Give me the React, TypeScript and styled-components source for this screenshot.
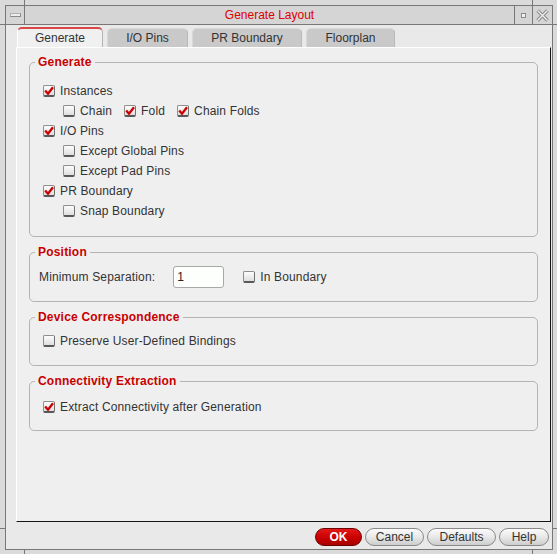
import React from 'react';
import styled, { createGlobalStyle } from 'styled-components';

const GlobalStyle = createGlobalStyle`
  html, body { margin: 0; padding: 0; background: #dadada; }
  body { font-family: "Liberation Sans", Arial, Helvetica, sans-serif; font-size: 12px; color: #333; }
  * { box-sizing: border-box; }
`;

const Screen = styled.div`
  position: relative;
  width: 557px;
  height: 554px;
  padding: 5px 4px 4px 5px;
  background: #dadada;
`;

const Tick = styled.span<{ $x: number; $y: number; $w: number; $h: number }>`
  position: absolute;
  left: ${p => p.$x}px;
  top: ${p => p.$y}px;
  width: ${p => p.$w}px;
  height: ${p => p.$h}px;
  background: #787878;
`;

const Frame = styled.div`
  width: 548px;
  height: 545px;
  border: 1px solid #787878;
  display: flex;
  flex-direction: column;
`;

const TitleBar = styled.div`
  height: 19px;
  flex: none;
  display: flex;
  border-bottom: 1px solid #787878;
  background: #d5d5d5;
`;

const TitleCell = styled.div<{ $w: number; $side: 'left' | 'right' }>`
  width: ${p => p.$w}px;
  flex: none;
  display: flex;
  align-items: center;
  justify-content: center;
  ${p => (p.$side === 'left' ? 'border-right' : 'border-left')}: 1px solid #787878;
`;

const MenuDash = styled.span`
  width: 11px;
  height: 4px;
  border: 1px solid #8a8a8a;
  border-top-color: #b0b0b0;
  border-left-color: #b0b0b0;
  background: #ececec;
`;

const MaxDot = styled.span`
  width: 5px;
  height: 5px;
  margin-left: -1px;
  border: 1px solid #8a8a8a;
  background: #f0f0f0;
`;

const Title = styled.div`
  flex: 1;
  text-align: center;
  line-height: 18px;
  color: #dd0000;
  font-size: 12px;
`;

const Body = styled.div`
  flex: 1;
  display: flex;
  flex-direction: column;
  padding: 2px 1px 0 10px;
  background: #e9e9e9;
`;

const TabBar = styled.div`
  height: 20px;
  flex: none;
  display: flex;
  align-items: flex-end;
  gap: 4px;
  margin-left: 1px;
`;

const Tab = styled.div<{ $active?: boolean; $w: number }>`
  width: ${p => p.$w}px;
  height: ${p => (p.$active ? 20 : 19)}px;
  text-align: center;
  line-height: 18px;
  color: #333;
  border-radius: 5px 5px 0 0;
  border: 1px solid ${p => (p.$active ? '#ffffff' : '#d8d8d8')};
  border-bottom: none;
  border-right-color: ${p => (p.$active ? '#b4b4b4' : '#b9b9b9')};
  ${p => (p.$active ? 'border-top: 2px solid #d84848;' : '')}
  background: ${p => (p.$active ? '#f0f0f0' : '#c9c9c9')};
`;

const Pane = styled.div`
  height: 475px;
  flex: none;
  display: flex;
  flex-direction: column;
  gap: 8px;
  padding: 7px 12px 0 12px;
  background: #efefef;
  border-top: 1px solid #ffffff;
  border-left: 1px solid #ffffff;
  border-right: 1px solid #141414;
  border-bottom: 1px solid #141414;
`;

const Group = styled.fieldset`
  margin: 0;
  padding: 0;
  min-width: 0;
  border: 1px solid #b4b4b4;
  border-radius: 5px;
`;

const GroupTitle = styled.legend`
  margin-left: 5px;
  padding: 0 3px;
  font-size: 12px;
  line-height: 14px;
  font-weight: bold;
  letter-spacing: 0.2px;
  color: #c80000;
`;

const GroupBody = styled.div<{ $pad: string }>`
  padding: ${p => p.$pad};
  display: flex;
  flex-direction: column;
`;

const Row = styled.div<{ $indent?: number; $h?: number; $gap?: number }>`
  display: flex;
  align-items: center;
  height: ${p => p.$h ?? 20}px;
  padding-left: ${p => p.$indent ?? 0}px;
  gap: ${p => p.$gap ?? 12}px;
`;

const CheckLabel = styled.label`
  display: inline-flex;
  align-items: center;
  gap: 5px;
  color: #333;
  letter-spacing: 0.15px;
  white-space: nowrap;
`;

const Box = styled.span`
  width: 12px;
  height: 12px;
  flex: none;
  display: inline-flex;
  align-items: center;
  justify-content: center;
  border: 1px solid #8e8e8e;
  border-bottom: 2px solid #585858;
  border-right-color: #707070;
  border-radius: 2px;
  background: linear-gradient(#fdfdfd, #dedede);
`;

const FieldLabel = styled.span`
  color: #333;
  letter-spacing: 0.15px;
  white-space: nowrap;
`;

const NumberInput = styled.input`
  width: 51px;
  height: 22px;
  margin-left: 18px;
  padding: 0 3px;
  border: 1px solid #a8a8a8;
  border-radius: 3px;
  background: #fcfffc;
  font-family: "Liberation Sans", Arial, sans-serif;
  font-size: 12px;
  color: #222;
  outline: none;
`;

const Spacer = styled.span<{ $w: number }>`
  width: ${p => p.$w}px;
  flex: none;
`;

const ButtonBar = styled.div`
  height: 27px;
  flex: none;
  display: flex;
  justify-content: flex-end;
  align-items: flex-start;
  gap: 3px;
  padding: 6px 2px 0 0;
`;

const Button = styled.button<{ $w: number; $primary?: boolean }>`
  width: ${p => p.$w}px;
  height: 18px;
  padding: 0;
  border-radius: 9px;
  font-family: "Liberation Sans", Arial, sans-serif;
  font-size: 12px;
  line-height: 16px;
  text-align: center;
  border: 1px solid ${p => (p.$primary ? '#6e0000' : '#8a8a8a')};
  color: ${p => (p.$primary ? '#ffffff' : '#333')};
  font-weight: ${p => (p.$primary ? 'bold' : 'normal')};
  background: ${p =>
    p.$primary
      ? 'linear-gradient(#e41818, #c80000 55%, #a80000)'
      : 'linear-gradient(#fbfbfb, #e8e8e8 50%, #cdcdcd)'};
`;

const Check: React.FC<{ label: string; checked?: boolean }> = ({ label, checked }) => (
  <CheckLabel>
    <Box>
      {checked && (
        <svg width="10" height="10" viewBox="0 0 10 10">
          <path d="M1.2 4.6 L4 7.8 L9 1.2" fill="none" stroke="#cc0000" strokeWidth="2.3" strokeLinejoin="miter" />
        </svg>
      )}
    </Box>
    {label}
  </CheckLabel>
);

const tabs = [
  { label: 'Generate', w: 86, active: true },
  { label: 'I/O Pins', w: 81 },
  { label: 'PR Boundary', w: 110 },
  { label: 'Floorplan', w: 89 },
];

const ticks = [
  { x: 24, y: 0, w: 1, h: 5 },
  { x: 532, y: 0, w: 1, h: 5 },
  { x: 0, y: 24, w: 5, h: 1 },
  { x: 553, y: 24, w: 4, h: 1 },
  { x: 0, y: 528, w: 5, h: 1 },
  { x: 553, y: 528, w: 4, h: 1 },
  { x: 24, y: 550, w: 1, h: 4 },
  { x: 532, y: 550, w: 1, h: 4 },
];

export default function App() {
  return (
    <>
      <GlobalStyle />
      <Screen>
        {ticks.map((t, i) => (
          <Tick key={i} $x={t.x} $y={t.y} $w={t.w} $h={t.h} />
        ))}
        <Frame>
          <TitleBar>
            <TitleCell $w={19} $side="left">
              <MenuDash />
            </TitleCell>
            <Title>Generate Layout</Title>
            <TitleCell $w={18} $side="right">
              <MaxDot />
            </TitleCell>
            <TitleCell $w={20} $side="right">
              <svg width="13" height="13" viewBox="0 0 13 13">
                <path d="M1.5 1.5 L11.5 11.5 M11.5 1.5 L1.5 11.5" stroke="#8a8a8a" strokeWidth="3.4" fill="none" />
                <path d="M1.5 1.5 L11.5 11.5 M11.5 1.5 L1.5 11.5" stroke="#ededed" strokeWidth="1.4" fill="none" />
              </svg>
            </TitleCell>
          </TitleBar>
          <Body>
            <TabBar>
              {tabs.map(t => (
                <Tab key={t.label} $w={t.w} $active={t.active}>
                  {t.label}
                </Tab>
              ))}
            </TabBar>
            <Pane>
              <Group>
                <GroupTitle>Generate</GroupTitle>
                <GroupBody $pad="12px 0 15px 13px">
                  <Row>
                    <Check label="Instances" checked />
                  </Row>
                  <Row $indent={20}>
                    <Check label="Chain" />
                    <Check label="Fold" checked />
                    <Check label="Chain Folds" checked />
                  </Row>
                  <Row>
                    <Check label="I/O Pins" checked />
                  </Row>
                  <Row $indent={20}>
                    <Check label="Except Global Pins" />
                  </Row>
                  <Row $indent={20}>
                    <Check label="Except Pad Pins" />
                  </Row>
                  <Row>
                    <Check label="PR Boundary" checked />
                  </Row>
                  <Row $indent={20}>
                    <Check label="Snap Boundary" />
                  </Row>
                </GroupBody>
              </Group>

              <Group>
                <GroupTitle>Position</GroupTitle>
                <GroupBody $pad="7px 0 13px 9px">
                  <Row $h={22} $gap={0}>
                    <FieldLabel>Minimum Separation:</FieldLabel>
                    <NumberInput defaultValue="1" />
                    <Spacer $w={19} />
                    <Check label="In Boundary" />
                  </Row>
                </GroupBody>
              </Group>

              <Group>
                <GroupTitle>Device Correspondence</GroupTitle>
                <GroupBody $pad="7px 0 14px 13px">
                  <Row>
                    <Check label="Preserve User-Defined Bindings" />
                  </Row>
                </GroupBody>
              </Group>

              <Group>
                <GroupTitle>Connectivity Extraction</GroupTitle>
                <GroupBody $pad="9px 0 13px 13px">
                  <Row>
                    <Check label="Extract Connectivity after Generation" checked />
                  </Row>
                </GroupBody>
              </Group>
            </Pane>
            <ButtonBar>
              <Button $w={47} $primary>OK</Button>
              <Button $w={59}>Cancel</Button>
              <Button $w={69}>Defaults</Button>
              <Button $w={50}>Help</Button>
            </ButtonBar>
          </Body>
        </Frame>
      </Screen>
    </>
  );
}
